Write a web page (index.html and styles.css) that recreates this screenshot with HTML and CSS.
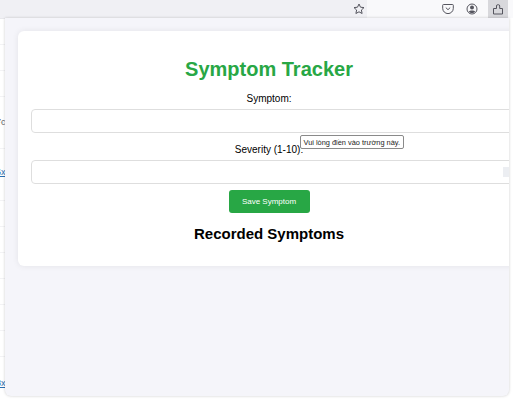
FILE: index.html
```html
<!DOCTYPE html>
<html lang="en">
<head>
  <meta charset="UTF-8">
  <title>Symptom Tracker</title>
  <link rel="stylesheet" href="styles.css">
</head>
<body>
  <div class="toolbar">
    <div class="toolbar-left">
      <svg class="icon star" viewBox="0 0 12 12"><path d="M6 1l1.500 3.200 3.500.4-2.600 2.400.7 3.500L6 8.800l-3.100 1.700.7-3.500L1 4.600l3.500-.4z"/></svg>
    </div>
    <div class="toolbar-right">
      <svg class="icon" viewBox="0 0 12 12"><path d="M1.500 1.500h9a.8.8 0 0 1 .8.8v3a5.300 5.300 0 0 1-10.600 0v-3a.8.8 0 0 1 .8-.8z"/><path d="M3.800 4.600L6 6.700l2.200-2.100"/></svg>
      <svg class="icon" viewBox="0 0 12 12"><circle cx="6" cy="6" r="5"/><circle class="solid" cx="6" cy="4.500" r="2"/><path class="solid" d="M2.800 8.700c.8-1.500 5.600-1.500 6.400 0-1.600 1.700-4.800 1.700-6.400 0z"/></svg>
      <div class="ext-btn">
        <svg class="icon" viewBox="0 0 12 12"><path d="M1.500 11V5.500h3V3a1.300 1.300 0 0 1 1.300-1.300h.6A1.300 1.300 0 0 1 7.700 3v2.500h2.800V11z"/></svg>
      </div>
    </div>
  </div>

  <div class="main">
    <div class="page-behind">
      <span class="frag frag-grey">7c</span>
      <span class="frag frag-link">6x</span>
      <span class="frag frag-link frag-last">8x</span>
    </div>

    <div class="popup">
      <div class="card">
        <h1>Symptom Tracker</h1>
        <form class="form">
          <label>Symptom:</label>
          <input type="text">
          <label>Severity (1-10):</label>
          <div class="number-wrap">
            <input type="text">
            <span class="spin"></span>
          </div>
          <button type="button">Save Symptom</button>
        </form>
        <h2>Recorded Symptoms</h2>
        <div class="tooltip">Vui lòng điền vào trường này.</div>
      </div>
    </div>
  </div>
</body>
</html>
```

FILE: styles.css
```css
html, body {
  margin: 0;
  height: 400px;
  overflow: hidden;
}
body {
  font-family: "Liberation Sans", Arial, sans-serif;
  background: #fff;
  color: #000;
}

.toolbar {
  display: flex;
  height: 18px;
  background: #f9f9fb;
}
.toolbar-left {
  display: flex;
  justify-content: flex-end;
  width: 367px;
  height: 18px;
  background: #f0f0f4;
  padding-right: 2px;
  box-sizing: border-box;
}
.toolbar-right {
  flex: 1;
  display: flex;
  justify-content: flex-end;
  gap: 12px;
  padding-right: 5px;
}
.icon {
  width: 12px;
  height: 12px;
  margin-top: 3px;
  fill: none;
  stroke: #55555e;
  stroke-width: 1;
}
.icon .solid {
  fill: #55555e;
  stroke: none;
}
.ext-btn {
  width: 20px;
  height: 18px;
  margin-left: -2px;
  background: #d8d8dc;
  text-align: center;
}

.main {
  display: flex;
  height: 382px;
}
.page-behind {
  display: flex;
  flex-direction: column;
  width: 5px;
  overflow: hidden;
  font-size: 9px;
  border-top: 1px solid #e8e8ec;
  box-sizing: border-box;
  background: repeating-linear-gradient(#fff 0, #fff 25px, #f3f3f5 25px, #f3f3f5 26px);
}
.frag {
  display: block;
  margin-left: -4px;
  line-height: 10px;
}
.frag-grey {
  color: #666;
  margin-top: 98px;
}
.frag-link {
  color: #2a6db0;
  text-decoration: underline;
  margin-top: 40px;
}
.frag-last {
  margin-top: 201px;
}

.popup {
  width: 504px;
  height: 378px;
  box-sizing: border-box;
  background: #f5f5fa;
  padding: 13px 0 0 13px;
  border-radius: 0 0 6px 6px;
  box-shadow: 0 0 3px rgba(0, 0, 0, 0.2);
  overflow: hidden;
}
.card {
  position: relative;
  width: 502px;
  height: 235px;
  box-sizing: border-box;
  padding: 25px 13px 0;
  background: #fff;
  border-radius: 6px;
  box-shadow: 0 0 6px rgba(0, 0, 0, 0.08);
  text-align: center;
}

h1 {
  margin: 0 0 10px;
  color: #28a745;
  font-size: 20px;
  line-height: 26px;
}
.form {
  display: flex;
  flex-direction: column;
  align-items: center;
}
label {
  font-size: 10px;
  line-height: 14px;
  margin-bottom: 3px;
}
input {
  display: block;
  width: calc(100% + 8px);
  height: 24px;
  box-sizing: border-box;
  margin: 0 0 10px;
  border: 1px solid #dedede;
  border-radius: 4px;
  background: #fff;
  align-self: flex-start;
}
.number-wrap {
  position: relative;
  width: 100%;
}
.spin {
  position: absolute;
  right: -3px;
  top: 7px;
  width: 7px;
  height: 10px;
  background: #eceef2;
}
button {
  width: 81px;
  height: 23px;
  margin-top: -4px;
  padding: 0;
  border: 0;
  border-radius: 3px;
  background: #28a745;
  color: #fff;
  font-family: inherit;
  font-size: 8px;
}
h2 {
  margin: 11px 0 0;
  font-size: 15px;
  line-height: 19px;
}
.tooltip {
  position: absolute;
  left: 282px;
  top: 104px;
  padding: 0 2.5px;
  height: 14px;
  line-height: 13px;
  box-sizing: border-box;
  border: 1px solid #8a8a8a;
  border-radius: 2px;
  background: #fff;
  font-size: 7.4px;
  color: #222;
  white-space: nowrap;
}
```
